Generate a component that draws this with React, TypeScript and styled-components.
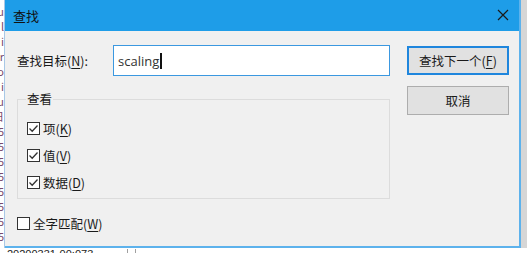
import * as React from 'react';
import styled, { createGlobalStyle } from 'styled-components';

const GlobalStyle = createGlobalStyle`
  html, body {
    margin: 0;
    padding: 0;
    overflow: hidden;
    background: #d8d8d8;
  }
  body {
    font-family: "Noto Sans CJK SC", "Noto Sans", sans-serif;
  }
`;

const DivScreen = styled.div`
  width: 527px;
  height: 253px;
  display: flex;
  flex-direction: column;
  overflow: hidden;
  background: #d6d6d6;
`;

const DivMiddle = styled.div`
  display: flex;
  flex-direction: row;
  height: 248px;
`;

const DivBehindLeft = styled.div`
  flex: 0 0 4px;
  overflow: hidden;
  background: #ffffff;
  display: flex;
  flex-direction: column;
  align-items: flex-end;
  padding-top: 4px;
  font-size: 11px;
  line-height: 15px;
  color: #7a4a6a;
  border-right: 1px solid #a8c8e6;
`;

const SpanFragment = styled.span`
  white-space: nowrap;
`;

const DivDialog = styled.div`
  flex: 0 0 516px;
  display: flex;
  flex-direction: column;
  background: #f0f0f0;
  border-right: 2px solid #5db2ec;
  border-bottom: 2px solid #5db2ec;
  box-sizing: border-box;
`;

const DivTitleBar = styled.div`
  flex: 0 0 31px;
  background: #1e9de8;
  display: flex;
  flex-direction: row;
  align-items: center;
  padding: 0 9px 0 8px;
`;

const DivTitle = styled.div`
  flex: 1 1 0;
  font-size: 13px;
  color: #111;
`;

const DivClose = styled.div`
  width: 14px;
  height: 14px;
  display: flex;
  align-items: center;
  justify-content: center;
  margin-top: -2px;
`;

const DivBody = styled.div`
  display: flex;
  flex-direction: row;
  padding: 14px 0 0 12px;
  gap: 17px;
`;

const DivLeftColumn = styled.div`
  flex: 0 0 373px;
  display: flex;
  flex-direction: column;
`;

const DivSearchRow = styled.div`
  display: flex;
  flex-direction: row;
  align-items: center;
  height: 31px;
`;

const LabelTarget = styled.label`
  flex: 0 0 96px;
  font-size: 12.5px;
  color: #1a1a1a;
`;

const DivInput = styled.div`
  flex: 1 1 0;
  height: 31px;
  box-sizing: border-box;
  border: 1px solid #3b98e0;
  background: #ffffff;
  display: flex;
  align-items: center;
  padding-left: 4px;
  font-family: "Open Sans", "Noto Sans", sans-serif;
  font-size: 13px;
  color: #333;
`;

const SpanCaret = styled.span`
  display: inline-block;
  width: 2px;
  height: 16px;
  margin-left: 1px;
  background: #111;
`;

const FieldsetView = styled.fieldset`
  margin: 15px 0 0 0;
  padding: 8px 0 2px 8px;
  border: 1px solid #dcdcdc;
  min-width: 0;
`;

const LegendView = styled.legend`
  padding: 0 1px;
  font-size: 12.5px;
  line-height: 16px;
  color: #1a1a1a;
`;

const DivCheckRow = styled.div<{ $height?: number }>`
  display: flex;
  flex-direction: row;
  align-items: center;
  gap: 3px;
  height: ${props => props.$height ?? 27}px;
  margin-left: 1px;
  font-size: 12.5px;
  color: #1a1a1a;
`;

const DivWholeWord = styled(DivCheckRow)`
  margin: 14px 0 0 0;
`;

const DivBox = styled.div`
  width: 13px;
  height: 13px;
  box-sizing: border-box;
  border: 1px solid #333;
  background: #ffffff;
  display: flex;
  align-items: center;
  justify-content: center;
`;

const U = styled.span`
  text-decoration: underline;
  text-underline-offset: 2px;
`;

const DivRightColumn = styled.div`
  flex: 0 0 102px;
  display: flex;
  flex-direction: column;
  gap: 11px;
  padding-top: 1px;
`;

const DivButton = styled.div<{ $default?: boolean }>`
  height: 29px;
  box-sizing: border-box;
  border: ${props => props.$default ? '2px solid #1f86dd' : '1px solid #adadad'};
  background: #e1e1e1;
  display: flex;
  align-items: center;
  justify-content: center;
  font-size: 12.5px;
  color: #1a1a1a;
`;

const DivBehindBottom = styled.div`
  flex: 0 0 5px;
  display: flex;
  flex-direction: row;
  background: #ffffff;
  overflow: hidden;
`;

const DivBottomCell = styled.div<{ $width: number }>`
  flex: 0 0 ${props => props.$width}px;
  padding-left: 7px;
  box-sizing: border-box;
  border-right: 1px solid #a0a0a0;
  font-family: "Liberation Sans", sans-serif;
  font-size: 11px;
  line-height: 11px;
  margin-top: 1px;
  color: #222;
  white-space: nowrap;
`;

function Check({ checked }: { checked: boolean }) {
  return (
    <DivBox>
      {checked && (
        <svg width="11" height="11" viewBox="0 0 11 11">
          <path d="M1.5 5.5 L4.2 8.2 L9.5 2.5" fill="none" stroke="#333" strokeWidth="1.3" />
        </svg>
      )}
    </DivBox>
  );
}

const options = [
  { name: '项', key: 'K' },
  { name: '值', key: 'V' },
  { name: '数据', key: 'D' },
];

const fragments = ['u', 'l', 'i', 'r', 'o', 'i', 'u', '日', '5', '5', '5', '5', '5', '5', '5', '5'];

export default function App() {
  return (
    <>
      <GlobalStyle />
      <DivScreen>
        <DivMiddle>
          <DivBehindLeft>
            {fragments.map((f, i) => <SpanFragment key={i}>{f}</SpanFragment>)}
          </DivBehindLeft>
          <DivDialog>
            <DivTitleBar>
              <DivTitle>查找</DivTitle>
              <DivClose>
                <svg width="12" height="12" viewBox="0 0 12 12">
                  <path d="M1 1 L11 11 M11 1 L1 11" stroke="#1a1a1a" strokeWidth="1.2" />
                </svg>
              </DivClose>
            </DivTitleBar>
            <DivBody>
              <DivLeftColumn>
                <DivSearchRow>
                  <LabelTarget>查找目标(<U>N</U>):</LabelTarget>
                  <DivInput>scaling<SpanCaret /></DivInput>
                </DivSearchRow>
                <FieldsetView>
                  <LegendView>查看</LegendView>
                  {options.map(o => (
                    <DivCheckRow key={o.key}>
                      <Check checked />
                      <span>{o.name}(<U>{o.key}</U>)</span>
                    </DivCheckRow>
                  ))}
                </FieldsetView>
                <DivWholeWord $height={20}>
                  <Check checked={false} />
                  <span>全字匹配(<U>W</U>)</span>
                </DivWholeWord>
              </DivLeftColumn>
              <DivRightColumn>
                <DivButton $default>查找下一个(<U>F</U>)</DivButton>
                <DivButton>取消</DivButton>
              </DivRightColumn>
            </DivBody>
          </DivDialog>
        </DivMiddle>
        <DivBehindBottom>
          <DivBottomCell $width={128}>20200331-00:073</DivBottomCell>
          <DivBottomCell $width={6}></DivBottomCell>
        </DivBehindBottom>
      </DivScreen>
    </>
  );
}
